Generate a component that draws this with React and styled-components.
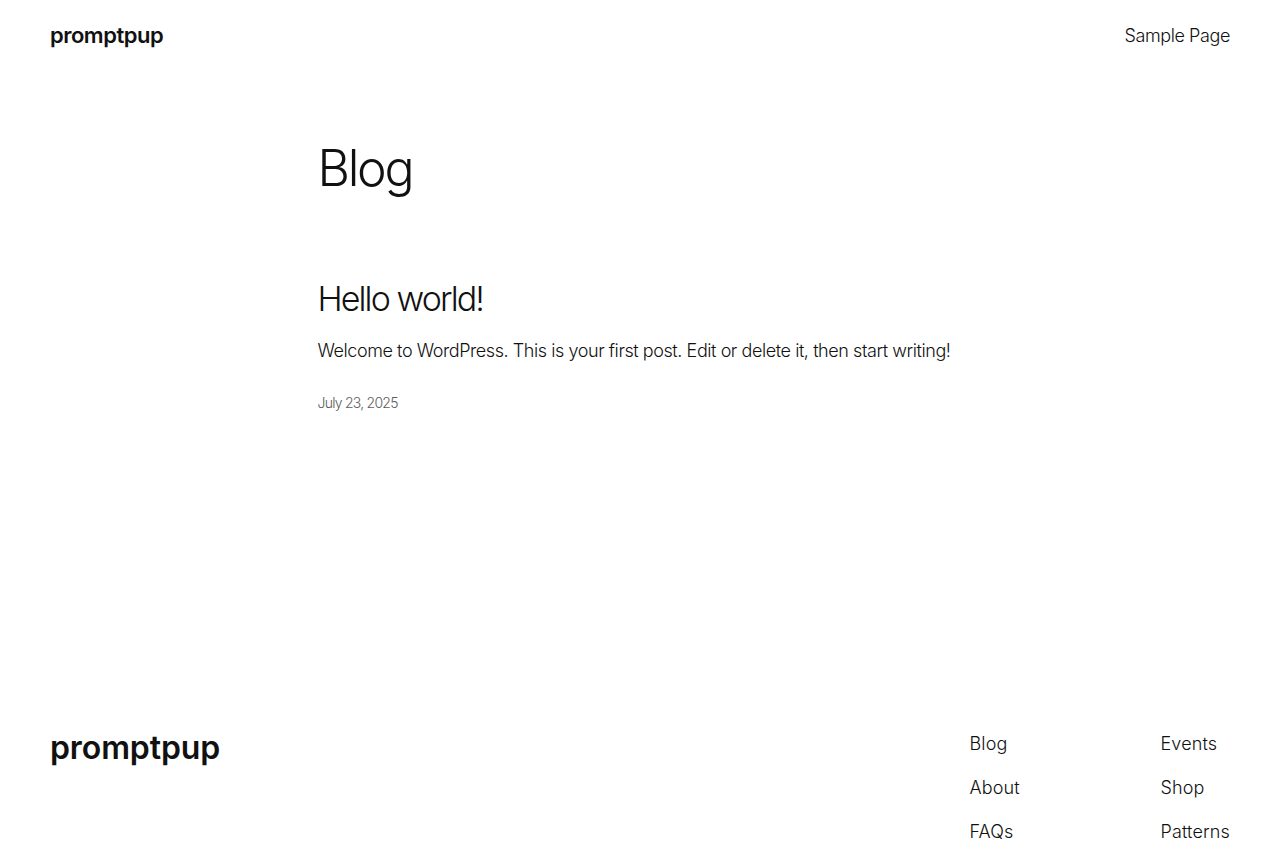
import React from 'react'
import styled, { createGlobalStyle } from 'styled-components'

const Global = createGlobalStyle`
  body {
    margin: 0;
    background: #ffffff;
    color: #111111;
    font-family: Inter, "Noto Sans", sans-serif;
    font-weight: 300;
  }
  a { color: inherit; text-decoration: none; }
`

const Page = styled.div`
  display: flex;
  flex-direction: column;
  min-height: 100vh;
`

const Header = styled.header`
  height: 70px;
  padding: 0 50px;
  display: flex;
  align-items: center;
  justify-content: space-between;
`

const SiteTitle = styled.a`
  font-weight: 600;
  font-size: ${p => (p.$big ? '32px' : '22px')};
  letter-spacing: ${p => (p.$big ? '-0.1px' : '-0.5px')};
  padding-top: ${p => (p.$big ? '4px' : '0')};
  line-height: 1;
`

const TopLink = styled.a`
  font-size: 18px;
  letter-spacing: -0.4px;
`

const Main = styled.main`
  width: 645px;
  margin: 0 auto;
  padding-top: 68px;
  padding-bottom: 317px;
`

const PageTitle = styled.h1`
  margin: 0;
  font-weight: 300;
  font-size: 50px;
  letter-spacing: -2.3px;
  line-height: 1.2;
`

const Post = styled.article`
  margin-top: 81px;
`

const PostTitle = styled.h2`
  margin: 0;
  font-weight: 300;
  font-size: 34px;
  letter-spacing: -1.9px;
  line-height: 1.2;
`

const Excerpt = styled.p`
  margin: 18px 0 0;
  font-size: 18px;
  letter-spacing: -0.43px;
  line-height: 1.4;
`

const Date = styled.div`
  margin-top: 31px;
  font-size: 14px;
  color: #5c5c5c;
  letter-spacing: -0.75px;
`

const Footer = styled.footer`
  padding: 0 50px 40px;
  display: flex;
  justify-content: space-between;
  align-items: flex-start;
`

const Columns = styled.div`
  display: grid;
  grid-template-columns: 191px auto;
`

const Column = styled.div`
  display: flex;
  flex-direction: column;
  gap: 21px;
  padding-top: 4px;
`

const FootLink = styled.a`
  font-size: 18px;
  letter-spacing: 0.15px;
  line-height: 23px;
`

export default function App() {
  return (
    <Page>
      <Global />
      <Header>
        <SiteTitle href="#">promptpup</SiteTitle>
        <TopLink href="#">Sample Page</TopLink>
      </Header>
      <Main>
        <PageTitle>Blog</PageTitle>
        <Post>
          <PostTitle>Hello world!</PostTitle>
          <Excerpt>
            Welcome to WordPress. This is your first post. Edit or delete it, then start writing!
          </Excerpt>
          <Date>July 23, 2025</Date>
        </Post>
      </Main>
      <Footer>
        <SiteTitle href="#" $big>promptpup</SiteTitle>
        <Columns>
          <Column>
            <FootLink href="#">Blog</FootLink>
            <FootLink href="#">About</FootLink>
            <FootLink href="#">FAQs</FootLink>
          </Column>
          <Column>
            <FootLink href="#">Events</FootLink>
            <FootLink href="#">Shop</FootLink>
            <FootLink href="#">Patterns</FootLink>
          </Column>
        </Columns>
      </Footer>
    </Page>
  )
}
